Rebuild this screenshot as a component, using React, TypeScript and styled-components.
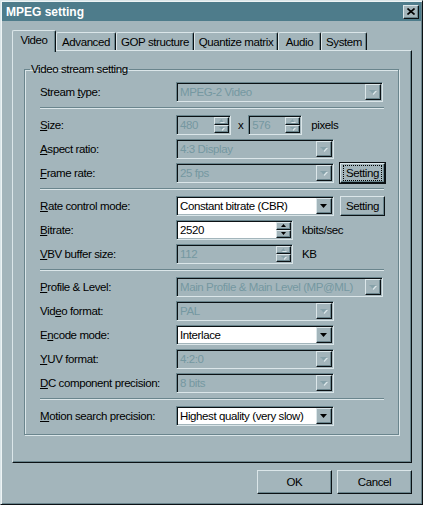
import styled, { createGlobalStyle, css } from 'styled-components';
import { ReactNode } from 'react';

const C = {
  face: '#a3b5bb',
  light: '#dbe6e9',
  shadow: '#6a858d',
  dark: '#0b1114',
  gray: '#7598a1',
  title: '#4e7c8b',
};

const GlobalStyle = createGlobalStyle`
  html, body {
    margin: 0;
    padding: 0;
    background: ${C.face};
  }
  body {
    font-family: "Liberation Sans", Arial, sans-serif;
    font-size: 11.5px;
    letter-spacing: -0.4px;
    color: #000;
  }
`;

const raised = css`
  background: ${C.face};
  border: 1px solid;
  border-color: ${C.light} ${C.dark} ${C.dark} ${C.light};
  box-shadow: inset -1px -1px 0 ${C.shadow};
  box-sizing: border-box;
`;

const Window = styled.div`
  width: 423px;
  height: 505px;
  box-sizing: border-box;
  background: ${C.face};
  border: 1px solid;
  border-color: ${C.light} ${C.dark} ${C.dark} ${C.light};
  box-shadow: inset 1px 1px 0 #eef4f5, inset -1px -1px 0 ${C.shadow};
  padding: 1px;
  display: flex;
  flex-direction: column;
`;

const TitleBar = styled.div`
  height: 19px;
  background: ${C.title};
  display: flex;
  align-items: center;
  justify-content: space-between;
  padding: 0 2px 0 4px;
`;

const Title = styled.span`
  color: #fff;
  font-weight: bold;
  font-size: 12px;
  letter-spacing: 0;
`;

const CloseButton = styled.div`
  ${raised};
  width: 16px;
  height: 14px;
  display: flex;
  align-items: center;
  justify-content: center;
`;

const Content = styled.div`
  padding: 9px 9px 0 10px;
  display: flex;
  flex-direction: column;
`;

const TabStrip = styled.div`
  display: flex;
  align-items: flex-end;
  height: 20px;
  position: relative;
  z-index: 1;
`;

const Tab = styled.div<{ $w: number; $active?: boolean }>`
  width: ${(p) => p.$w}px;
  height: ${(p) => (p.$active ? 22 : 18)}px;
  margin-bottom: ${(p) => (p.$active ? -2 : 0)}px;
  box-sizing: border-box;
  background: ${C.face};
  border-top: 1px solid ${C.light};
  border-left: 1px solid ${C.light};
  border-right: 1px solid ${C.dark};
  border-radius: 2px 2px 0 0;
  box-shadow: inset -1px 0 0 ${C.shadow};
  display: flex;
  align-items: center;
  justify-content: center;
  padding-bottom: ${(p) => (p.$active ? 3 : 0)}px;
  white-space: nowrap;
`;

const Panel = styled.div`
  height: 413px;
  box-sizing: border-box;
  border: 1px solid;
  border-color: ${C.light} ${C.dark} ${C.dark} ${C.light};
  box-shadow: inset -1px -1px 0 ${C.shadow};
  padding: 12px 0 0 11px;
`;

const GroupBox = styled.fieldset`
  margin: 0;
  padding: 0;
  width: 375px;
  box-sizing: border-box;
  border: 1px solid ${C.shadow};
  box-shadow: inset 1px 1px 0 ${C.light}, 1px 1px 0 ${C.light};
  min-inline-size: 0;
`;

const Legend = styled.legend`
  padding: 0 1px;
  margin-left: 5px;
  line-height: 13px;
`;

const Rows = styled.div`
  display: flex;
  flex-direction: column;
  gap: 4px;
  padding: 6px 0 8px 15px;
`;

const Row = styled.div`
  display: flex;
  align-items: center;
  height: 20px;
`;

const Label = styled.span`
  width: 136px;
  flex: none;
  white-space: nowrap;
`;

const Separator = styled.div`
  width: 344px;
  height: 0;
  border-top: 1px solid ${C.shadow};
  border-bottom: 1px solid ${C.light};
  margin: 1px 0 2px;
`;

const Field = styled.div<{ $w: number; $on?: boolean }>`
  width: ${(p) => p.$w}px;
  height: 20px;
  box-sizing: border-box;
  flex: none;
  display: flex;
  align-items: center;
  background: ${(p) => (p.$on ? '#fff' : C.face)};
  color: ${(p) => (p.$on ? '#000' : C.gray)};
  border: 1px solid;
  border-color: ${C.shadow} ${C.light} ${C.light} ${C.shadow};
  box-shadow: inset 1px 1px 0 ${C.dark}, inset -1px -1px 0 ${C.face};
  padding: 1px;
`;

const Value = styled.span`
  flex: 1;
  padding-left: 2px;
  white-space: nowrap;
  overflow: hidden;
`;

const DropButton = styled.div`
  ${raised};
  width: 16px;
  height: 16px;
  display: flex;
  align-items: center;
  justify-content: center;
`;

const SpinBox = styled.div`
  width: 15px;
  height: 16px;
  display: flex;
  flex-direction: column;
`;

const SpinHalf = styled.div`
  ${raised};
  flex: 1;
  display: flex;
  align-items: center;
  justify-content: center;
`;

const Unit = styled.span<{ $gap: number }>`
  margin-left: ${(p) => p.$gap}px;
  margin-right: ${(p) => (p.$gap < 8 ? 5 : 0)}px;
`;

const PushButton = styled.div<{ $w: number; $h: number; $focus?: boolean }>`
  ${raised};
  width: ${(p) => p.$w}px;
  height: ${(p) => p.$h}px;
  display: flex;
  align-items: center;
  justify-content: center;
  flex: none;
  ${(p) =>
    p.$focus &&
    css`
      outline: 1px solid ${C.dark};
      outline-offset: 0;
    `}
`;

const SideButton = styled(PushButton)`
  margin-left: 6px;
`;

const FocusText = styled.span`
  outline: 1px dotted #000;
  outline-offset: 1px;
  padding: 0 1px;
`;

const ButtonRow = styled.div`
  display: flex;
  justify-content: flex-end;
  gap: 5px;
  margin-top: 7px;
`;

const Arrow = ({ up, on, small }: { up?: boolean; on?: boolean; small?: boolean }) => {
  const w = small ? 5 : 7;
  const h = small ? 3 : 4;
  const pts = up ? `0,${h} ${w},${h} ${w / 2},0` : `0,0 ${w},0 ${w / 2},${h}`;
  return (
    <svg width={w + 1} height={h + 1} viewBox={`0 0 ${w + 1} ${h + 1}`}>
      {!on && <polygon points={pts} fill={C.light} transform="translate(1 1)" />}
      <polygon points={pts} fill={on ? '#000' : '#87a2aa'} />
    </svg>
  );
};

const Combo = ({ w, on, children }: { w: number; on?: boolean; children: ReactNode }) => (
  <Field $w={w} $on={on}>
    <Value>{children}</Value>
    <DropButton>
      <Arrow on={on} />
    </DropButton>
  </Field>
);

const Spin = ({ w, on, children }: { w: number; on?: boolean; children: ReactNode }) => (
  <Field $w={w} $on={on}>
    <Value>{children}</Value>
    <SpinBox>
      <SpinHalf>
        <Arrow up small on={on} />
      </SpinHalf>
      <SpinHalf>
        <Arrow small on={on} />
      </SpinHalf>
    </SpinBox>
  </Field>
);

const tabs = [
  { name: 'Video', w: 44 },
  { name: 'Advanced', w: 60 },
  { name: 'GOP structure', w: 78 },
  { name: 'Quantize matrix', w: 84 },
  { name: 'Audio', w: 43 },
  { name: 'System', w: 46 },
];

export default function App() {
  return (
    <>
      <GlobalStyle />
      <Window>
        <TitleBar>
          <Title>MPEG setting</Title>
          <CloseButton>
            <svg width="8" height="7" viewBox="0 0 8 7">
              <path d="M0.5 0.5 L7.5 6.5 M7.5 0.5 L0.5 6.5" stroke="#000" strokeWidth="1.6" />
            </svg>
          </CloseButton>
        </TitleBar>
        <Content>
          <TabStrip>
            {tabs.map((t, i) => (
              <Tab key={t.name} $w={t.w} $active={i === 0}>
                {t.name}
              </Tab>
            ))}
          </TabStrip>
          <Panel>
            <GroupBox>
              <Legend>Video stream setting</Legend>
              <Rows>
                <Row>
                  <Label>
                    Stream <u>t</u>ype:
                  </Label>
                  <Combo w={207}>MPEG-2 Video</Combo>
                </Row>
                <Separator />
                <Row>
                  <Label>
                    <u>S</u>ize:
                  </Label>
                  <Spin w={55}>480</Spin>
                  <Unit $gap={7}>x</Unit>
                  <Spin w={54}>576</Spin>
                  <Unit $gap={9}>pixels</Unit>
                </Row>
                <Row>
                  <Label>
                    <u>A</u>spect ratio:
                  </Label>
                  <Combo w={158}>4:3 Display</Combo>
                </Row>
                <Row>
                  <Label>
                    <u>F</u>rame rate:
                  </Label>
                  <Combo w={158}>25 fps</Combo>
                  <SideButton $w={45} $h={20} $focus>
                    <FocusText>Setting</FocusText>
                  </SideButton>
                </Row>
                <Separator />
                <Row>
                  <Label>
                    <u>R</u>ate control mode:
                  </Label>
                  <Combo w={158} on>
                    Constant bitrate (CBR)
                  </Combo>
                  <SideButton $w={45} $h={20}>
                    Setting
                  </SideButton>
                </Row>
                <Row>
                  <Label>
                    <u>B</u>itrate:
                  </Label>
                  <Spin w={117} on>
                    2520
                  </Spin>
                  <Unit $gap={9}>kbits/sec</Unit>
                </Row>
                <Row>
                  <Label>
                    <u>V</u>BV buffer size:
                  </Label>
                  <Spin w={117}>112</Spin>
                  <Unit $gap={9}>KB</Unit>
                </Row>
                <Separator />
                <Row>
                  <Label>
                    <u>P</u>rofile &amp; Level:
                  </Label>
                  <Combo w={207}>Main Profile &amp; Main Level (MP@ML)</Combo>
                </Row>
                <Row>
                  <Label>
                    Vid<u>e</u>o format:
                  </Label>
                  <Combo w={158}>PAL</Combo>
                </Row>
                <Row>
                  <Label>
                    E<u>n</u>code mode:
                  </Label>
                  <Combo w={158} on>
                    Interlace
                  </Combo>
                </Row>
                <Row>
                  <Label>
                    <u>Y</u>UV format:
                  </Label>
                  <Combo w={158}>4:2:0</Combo>
                </Row>
                <Row>
                  <Label>
                    <u>D</u>C component precision:
                  </Label>
                  <Combo w={158}>8 bits</Combo>
                </Row>
                <Separator />
                <Row>
                  <Label>
                    <u>M</u>otion search precision:
                  </Label>
                  <Combo w={158} on>
                    Highest quality (very slow)
                  </Combo>
                </Row>
              </Rows>
            </GroupBox>
          </Panel>
          <ButtonRow>
            <PushButton $w={75} $h={24}>OK</PushButton>
            <PushButton $w={75} $h={24}>Cancel</PushButton>
          </ButtonRow>
        </Content>
      </Window>
    </>
  );
}
